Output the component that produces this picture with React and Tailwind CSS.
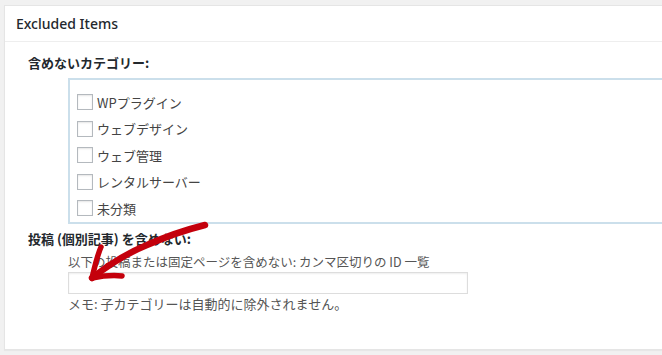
export default function App() {
  const cats = ["WPプラグイン", "ウェブデザイン", "ウェブ管理", "レンタルサーバー", "未分類"];
  const font = { fontFamily: '"Noto Sans CJK JP", "Noto Sans", sans-serif' };
  return (
    <div className="relative w-[662px] h-[355px] bg-[#f1f1f1] pt-[5px] pl-[4px] overflow-hidden" style={font}>
      <div className="h-[345px] bg-white border border-r-0 border-[#e5e5e5] shadow-[0_1px_1px_rgba(0,0,0,0.04)]">
        <div
          className="h-[36px] flex items-center pl-[11px] border-b border-[#eeeeee] text-[14px] font-medium text-[#23282d]"
          style={{ fontFamily: '"Noto Sans", "Open Sans", sans-serif' }}
        >
          Excluded Items
        </div>
        <div className="h-[12px]" />
        <div className="h-[18px] flex items-center pl-[23px] text-[13px] font-semibold text-[#23282d]">
          含めないカテゴリー:
        </div>
        <div className="h-[6px]" />
        <div className="ml-[63px] h-[146px] border-2 border-r-0 border-[#cbdfeb] pt-[9px] pl-[7px]">
          {cats.map((c) => (
            <div key={c} className="h-[26.5px] flex items-center gap-[4px] text-[13px] text-[#444]">
              <span className="w-[16px] h-[16px] border border-[#b4b9be] bg-white shadow-[inset_0_1px_2px_rgba(0,0,0,0.1)]" />
              <span>{c}</span>
            </div>
          ))}
        </div>
        <div className="h-[6px]" />
        <div className="h-[18px] flex items-center pl-[23px] text-[13px] font-semibold text-[#23282d]">
          投稿 (個別記事) を含めない:
        </div>
        <div className="ml-[63px] mt-[6px] h-[17px] flex items-center text-[12.5px] text-[#555]">
          以下の投稿または固定ページを含めない: カンマ区切りの ID 一覧
        </div>
        <div className="ml-[63px] mt-[1px] w-[400px] h-[22px] border border-[#dddddd] shadow-[inset_0_1px_2px_rgba(0,0,0,0.07)]" />
        <div className="ml-[63px] mt-[1px] h-[17px] flex items-center text-[13px] text-[#555]">
          メモ: 子カテゴリーは自動的に除外されません。
        </div>
      </div>
      <svg className="absolute left-0 top-0 pointer-events-none" width="662" height="355" viewBox="0 0 662 355">
        <g fill="none" stroke="#c4000c" strokeLinecap="round" strokeLinejoin="round">
          <path d="M205 225 C185 230 165 237 147 245 C130 252 112 262 92 278" strokeWidth="6.5" />
          <path d="M92 278 C95 266 97 256 101 247" strokeWidth="5.5" />
          <path d="M92 278 C102 276 112 275 122 276" strokeWidth="5.5" />
        </g>
      </svg>
    </div>
  );
}
